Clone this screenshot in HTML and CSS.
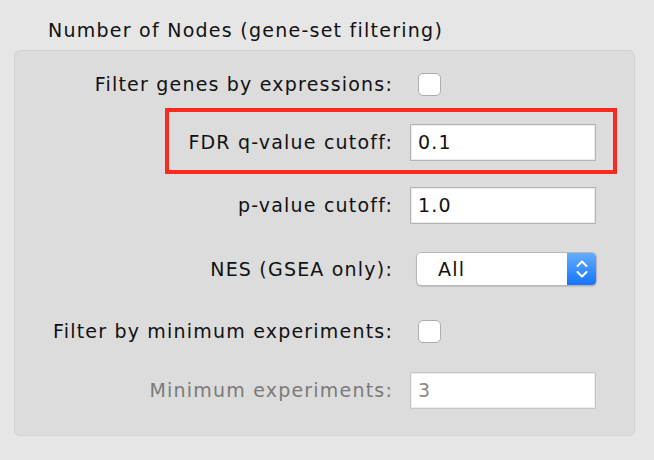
FILE: index.html
```html
<!DOCTYPE html>
<html>
<head>
<meta charset="utf-8">
<link rel="stylesheet" href="styles.css">
</head>
<body>
<div class="title">Number of Nodes (gene-set filtering)</div>
<div class="panel">
  <div class="row r1">
    <span class="label">Filter genes by expressions:</span>
    <span class="checkbox"></span>
  </div>
  <div class="row r2 highlight">
    <span class="label">FDR q-value cutoff:</span>
    <span class="field">0.1</span>
  </div>
  <div class="row r3">
    <span class="label">p-value cutoff:</span>
    <span class="field">1.0</span>
  </div>
  <div class="row r4">
    <span class="label">NES (GSEA only):</span>
    <span class="select"><span class="select-text">All</span><span class="select-btn"><svg width="14" height="22" viewBox="0 0 14 22"><path d="M2.5 8 L7 3.5 L11.5 8" fill="none" stroke="#fff" stroke-width="2" stroke-linecap="round" stroke-linejoin="round"/><path d="M2.5 14 L7 18.5 L11.5 14" fill="none" stroke="#fff" stroke-width="2" stroke-linecap="round" stroke-linejoin="round"/></svg></span></span>
  </div>
  <div class="row r5">
    <span class="label">Filter by minimum experiments:</span>
    <span class="checkbox"></span>
  </div>
  <div class="row r6 disabled">
    <span class="label">Minimum experiments:</span>
    <span class="field">3</span>
  </div>
</div>
</body>
</html>
```
FILE: styles.css
```css
html, body {
  margin: 0;
  padding: 0;
  background: #e6e6e6;
  width: 654px;
  height: 460px;
  overflow: hidden;
  font-family: "DejaVu Sans", "Liberation Sans", sans-serif;
  font-size: 19px;
  letter-spacing: 1.2px;
  color: #111;
}
.title {
  padding: 19px 0 0 48px;
  height: 50px;
  line-height: 22px;
  box-sizing: border-box;
  letter-spacing: 1.25px;
}
.panel {
  width: 621px;
  height: 386px;
  margin-left: 14px;
  box-sizing: border-box;
  background: #dcdcdc;
  border: 1px solid #d2d2d2;
  border-radius: 6px;
  padding-top: 13px;
  display: flex;
  flex-direction: column;
}
.row {
  display: grid;
  grid-template-columns: 377px 1fr;
  column-gap: 18px;
  align-items: center;
  height: 40px;
}
.r2 { margin-top: 18px; }
.r3 { margin-top: 23px; }
.r4 { margin-top: 24px; }
.r5 { margin-top: 22px; }
.r6 { margin-top: 19px; }
.label {
  text-align: right;
  white-space: nowrap;
  margin-right: -1px;
}
.highlight {
  position: relative;
}
.highlight::after {
  content: "";
  position: absolute;
  left: 150px;
  right: 17px;
  top: -14px;
  bottom: -12px;
  border: 4px solid #fb2a1f;
  pointer-events: none;
}
.field {
  width: 186px;
  height: 37px;
  box-sizing: border-box;
  background: #fff;
  border: 1px solid #b4b4b4;
  box-shadow: inset 0 0 0 1px #ececec;
  padding-left: 7px;
  line-height: 35px;
  color: #111;
}
.disabled .label { color: #7a7a7a; }
.disabled .field {
  color: #8a8a8a;
  border-color: #c6c6c6;
}
.checkbox {
  width: 23px;
  height: 23px;
  box-sizing: border-box;
  margin-left: 8px;
  background: #fff;
  border: 1px solid #adadad;
  border-radius: 5px;
}
.select {
  margin-left: 6px;
  width: 181px;
  height: 34px;
  box-sizing: border-box;
  display: flex;
  background: #fff;
  border: 1px solid #b7b7b7;
  border-radius: 5px;
  box-shadow: 0 1px 1px rgba(0,0,0,0.12);
  overflow: hidden;
}
.select-text {
  flex: 1;
  padding-left: 21px;
  line-height: 32px;
  color: #111;
}
.select-btn {
  width: 29px;
  background: linear-gradient(#64acfe, #1675fe);
  display: flex;
  align-items: center;
  justify-content: center;
}
```
